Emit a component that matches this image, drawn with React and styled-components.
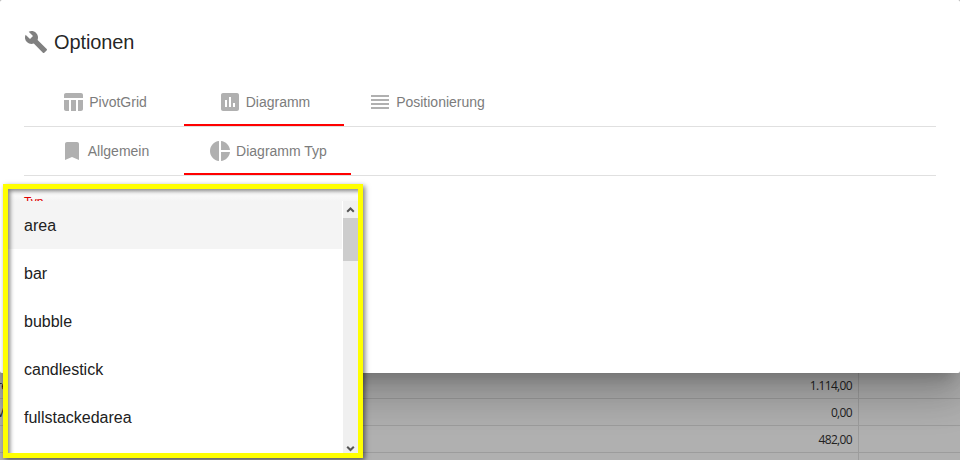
import React from "react";
import styled, { createGlobalStyle } from "styled-components";

const GlobalStyle = createGlobalStyle`
  * { box-sizing: border-box; }
  body {
    margin: 0;
    overflow: hidden;
    font-family: "Liberation Sans", Arial, sans-serif;
  }
`;

const Page = styled.div`
  position: relative;
  display: flex;
  flex-direction: column;
  width: 960px;
  height: 460px;
  overflow: hidden;
  background: #b0b0b0;
`;

const Dialog = styled.section`
  position: relative;
  z-index: 1;
  flex: none;
  height: 373px;
  padding: 30px 24px 0;
  border-radius: 2px;
  background: #fff;
  box-shadow:
    0 11px 15px -7px rgba(0, 0, 0, 0.2),
    0 24px 38px 3px rgba(0, 0, 0, 0.14),
    0 9px 46px 8px rgba(0, 0, 0, 0.12);
`;

const Title = styled.h1`
  display: flex;
  align-items: center;
  gap: 6px;
  height: 24px;
  margin: 0 0 24px;
  font-size: 20px;
  font-weight: 400;
  letter-spacing: -0.1px;
  color: rgba(0, 0, 0, 0.87);
`;

const TabBar = styled.nav`
  display: flex;
  height: 49px;
  border-bottom: 1px solid #e0e0e0;
`;

const Tab = styled.div`
  display: flex;
  align-items: center;
  justify-content: center;
  gap: 4px;
  width: ${(p) => p.$width}px;
  height: 48px;
  border-bottom: 2px solid ${(p) => (p.$active ? "#ff0000" : "transparent")};
  padding-top: 2px;
  padding-left: ${(p) => p.$indent || 0}px;
  font-size: 14px;
  white-space: nowrap;
  color: #7c7c7c;
`;

const Icon = styled.svg`
  flex: none;
  width: 24px;
  height: 24px;
  fill: ${(p) => p.$color || "#b0b0b0"};
`;

const GridRow = styled.div`
  display: grid;
  grid-template-columns: 859px 1fr;
  flex: none;
  height: ${(p) => p.$height || 27}px;
  border-bottom: 1px solid #9c9c9c;
`;

const GridCell = styled.div`
  display: flex;
  align-items: center;
  justify-content: space-between;
  padding: 0 6px 0 0;
  border-right: 1px solid #9c9c9c;
  font-family: "Open Sans", "Noto Sans", sans-serif;
  font-size: 12px;
  letter-spacing: -0.65px;
  color: #222;
`;

const RowLabel = styled.span`
  margin-left: -3px;
`;

const Frame = styled.div`
  position: absolute;
  z-index: 2;
  left: 3px;
  top: 184px;
  display: flex;
  flex-direction: column;
  width: 360px;
  height: 274px;
  border: 5px solid #ff0;
  background: #fff;
  box-shadow: 2px 2px 5px rgba(0, 0, 0, 0.5);

  &::after {
    content: "";
    position: absolute;
    inset: 0 -6px -6px 0;
    box-shadow: inset 2px 2px 4px rgba(0, 0, 0, 0.5);
    clip-path: inset(0 6px 6px 0);
    pointer-events: none;
  }
`;

const FieldLabel = styled.div`
  flex: none;
  height: 12px;
  padding: 6px 16px 0;
  overflow: hidden;
  font-size: 12px;
  line-height: 14px;
  color: #e00000;
  background: linear-gradient(#fff, #f4f4f4);
`;

const Menu = styled.div`
  display: flex;
  flex: 1;
  min-height: 0;
`;

const Options = styled.div`
  flex: 1;
  overflow: hidden;
`;

const Option = styled.div`
  display: flex;
  align-items: center;
  height: 48px;
  margin-right: 1px;
  padding: 2px 16px 0;
  font-size: 16px;
  color: #212121;
  background: ${(p) => (p.$selected ? "#f4f4f4" : "#fff")};
`;

const Scrollbar = styled.div`
  display: flex;
  flex-direction: column;
  width: 15px;
  background: #f0f0f0;
`;

const Arrow = styled.svg`
  flex: none;
  width: 15px;
  height: 17px;
  fill: none;
  stroke: #555;
  stroke-width: 2;
`;

const Thumb = styled.div`
  height: 43px;
  margin-bottom: auto;
  background: #cdcdcd;
`;

const icons = {
  wrench:
    "M22.7 19l-9.1-9.1c.9-2.3.4-5-1.5-6.9-2-2-5-2.4-7.4-1.3L9 6 6 9 1.6 4.7C.4 7.1.9 10.1 2.9 12.1c1.9 1.9 4.6 2.4 6.9 1.5l9.1 9.1c.4.4 1 .4 1.4 0l2.3-2.3c.5-.4.5-1.1.1-1.4z",
  table:
    "M10 10h5v11h-5zM17 21h3c1.1 0 2-.9 2-2v-9h-5v11zm3-18H5c-1.1 0-2 .9-2 2v3h19V5c0-1.1-.9-2-2-2zM3 19c0 1.1.9 2 2 2h3V10H3v9z",
  chart:
    "M19 3H5c-1.1 0-2 .9-2 2v14c0 1.1.9 2 2 2h14c1.1 0 2-.9 2-2V5c0-1.1-.9-2-2-2zM9 17H7v-7h2v7zm4 0h-2V7h2v10zm4 0h-2v-4h2v4z",
  lines: "M3 15h18v-2H3v2zm0 4h18v-2H3v2zm0-8h18V9H3v2zm0-6v2h18V5H3z",
  bookmark: "M17 3H7c-1.1 0-2 .9-2 2v16l7-3 7 3V5c0-1.1-.9-2-2-2z",
  pie: "M11 2v20c-5.07-.5-9-4.79-9-10s3.93-9.5 9-10zm2.03 0v8.99H22c-.47-4.74-4.24-8.52-8.97-8.99zm0 11.01V22c4.74-.47 8.5-4.25 8.97-8.99h-8.97z",
};

const mainTabs = [
  { label: "PivotGrid", icon: "table", width: 160 },
  { label: "Diagramm", icon: "chart", width: 160, active: true },
  { label: "Positionierung", icon: "lines", width: 165 },
];

const subTabs = [
  { label: "Allgemein", icon: "bookmark", width: 160, indent: 1 },
  { label: "Diagramm Typ", icon: "pie", width: 167, active: true },
];

const options = ["area", "bar", "bubble", "candlestick", "fullstackedarea"];

const rows = [
  { label: "re", value: "1.114,00", height: 26 },
  { label: "Ve", value: "0,00" },
  { label: "", value: "482,00" },
  { label: "", value: "" },
];

function Glyph({ name, color }) {
  return (
    <Icon viewBox="0 0 24 24" $color={color}>
      <path d={icons[name]} />
    </Icon>
  );
}

function Tabs({ items }) {
  return (
    <TabBar>
      {items.map((tab) => (
        <Tab
          key={tab.label}
          $width={tab.width}
          $active={tab.active}
          $indent={tab.indent}
        >
          <Glyph name={tab.icon} />
          <span>{tab.label}</span>
        </Tab>
      ))}
    </TabBar>
  );
}

export default function App() {
  return (
    <Page>
      <GlobalStyle />
      <Dialog>
        <Title>
          <Glyph name="wrench" color="#808080" />
          <span>Optionen</span>
        </Title>
        <Tabs items={mainTabs} />
        <Tabs items={subTabs} />
      </Dialog>
      {rows.map((row, i) => (
        <GridRow key={i} $height={row.height}>
          <GridCell>
            <RowLabel>{row.label}</RowLabel>
            <span>{row.value}</span>
          </GridCell>
        </GridRow>
      ))}
      <Frame>
        <FieldLabel>Typ</FieldLabel>
        <Menu>
          <Options>
            {options.map((option, i) => (
              <Option key={option} $selected={i === 0}>
                {option}
              </Option>
            ))}
          </Options>
          <Scrollbar>
            <Arrow viewBox="0 0 15 17">
              <path d="M4.2 10.8 7.5 7.5l3.3 3.3" />
            </Arrow>
            <Thumb />
            <Arrow viewBox="0 0 15 17">
              <path d="m4.2 10.7 3.3 3.3 3.3-3.3" />
            </Arrow>
          </Scrollbar>
        </Menu>
      </Frame>
    </Page>
  );
}
